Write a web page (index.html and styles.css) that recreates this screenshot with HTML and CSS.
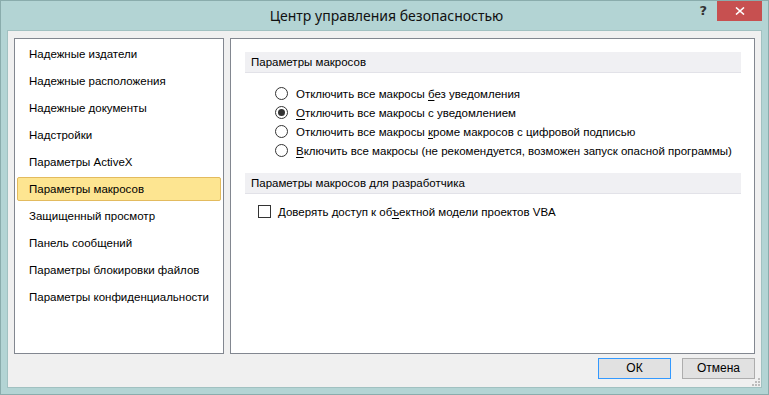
FILE: index.html
```html
<!DOCTYPE html>
<html lang="ru">
<head>
<meta charset="utf-8">
<title>Центр управления безопасностью</title>
<link rel="stylesheet" href="styles.css">
</head>
<body>
<div class="window">
  <div class="titlebar">
    <div class="tb-spacer"></div>
    <div class="title">Центр управления безопасностью</div>
    <div class="tb-controls">
      <span class="help">?</span>
      <span class="close"><svg width="10" height="8" viewBox="0 0 10 8"><path d="M1 0.5 L9 7.5 M9 0.5 L1 7.5" stroke="#fff" stroke-width="1.6"/></svg></span>
    </div>
  </div>
  <div class="client">
    <div class="panels">
      <ul class="nav">
        <li class="nav-item">Надежные издатели</li>
        <li class="nav-item">Надежные расположения</li>
        <li class="nav-item">Надежные документы</li>
        <li class="nav-item">Надстройки</li>
        <li class="nav-item">Параметры ActiveX</li>
        <li class="nav-item selected">Параметры макросов</li>
        <li class="nav-item">Защищенный просмотр</li>
        <li class="nav-item">Панель сообщений</li>
        <li class="nav-item">Параметры блокировки файлов</li>
        <li class="nav-item">Параметры конфиденциальности</li>
      </ul>
      <div class="content">
        <div class="section-head">Параметры макросов</div>
        <div class="options">
          <label class="opt"><span class="radio"></span><span>Отключить все макросы <u>б</u>ез уведомления</span></label>
          <label class="opt"><span class="radio checked"></span><span><u>О</u>тключить все макросы с уведомлением</span></label>
          <label class="opt"><span class="radio"></span><span>Отключить все макросы <u>к</u>роме макросов с цифровой подписью</span></label>
          <label class="opt"><span class="radio"></span><span><u>В</u>ключить все макросы (не рекомендуется, возможен запуск опасной программы)</span></label>
        </div>
        <div class="section-head second">Параметры макросов для разработчика</div>
        <label class="check-row"><span class="checkbox"></span><span>Доверять доступ к об<u>ъ</u>ектной модели проектов VBA</span></label>
      </div>
    </div>
    <div class="buttons">
      <button class="btn default">ОК</button>
      <button class="btn">Отмена</button>
    </div>
    <svg class="grip" width="9" height="9" viewBox="0 0 9 9">
      <rect x="7" y="1" width="2" height="2" fill="#bcbcbc"/>
      <rect x="4" y="4" width="2" height="2" fill="#bcbcbc"/>
      <rect x="7" y="4" width="2" height="2" fill="#bcbcbc"/>
      <rect x="1" y="7" width="2" height="2" fill="#bcbcbc"/>
      <rect x="4" y="7" width="2" height="2" fill="#bcbcbc"/>
      <rect x="7" y="7" width="2" height="2" fill="#bcbcbc"/>
    </svg>
  </div>
</div>
</body>
</html>
```

FILE: styles.css
```css
* { box-sizing: border-box; }
html, body { margin: 0; padding: 0; }
body {
  width: 769px;
  height: 395px;
  overflow: hidden;
  font-family: "Liberation Sans", Arial, sans-serif;
  font-size: 11.5px;
  color: #000;
}
.window {
  width: 769px;
  height: 395px;
  border: 1px solid #8aacac;
  background: #b3d4d4;
  display: flex;
  flex-direction: column;
  padding: 0 6px 6px 6px;
}
.titlebar {
  height: 29px;
  display: grid;
  grid-template-columns: 1fr auto 1fr;
  align-items: start;
  margin: 0 -6px 0 0;
}
.title {
  font-family: "Noto Sans", "Open Sans", sans-serif;
  font-size: 14px;
  line-height: 30px;
  color: #111;
  padding-right: 2px;
}
.tb-controls {
  display: flex;
  justify-content: flex-end;
  align-items: flex-start;
  padding-right: 6px;
}
.help {
  font-weight: bold;
  font-size: 13px;
  line-height: 20px;
  color: #333;
  margin-right: 10px;
  font-family: "DejaVu Sans", sans-serif;
}
.close {
  width: 45px;
  height: 20px;
  background: #c75050;
  display: flex;
  align-items: center;
  justify-content: center;
}
.client {
  flex: 1;
  position: relative;
  border: 1px solid #a1c1c1;
  background: #f0f0f0;
  padding: 7px 6px 0 6px;
  display: flex;
  flex-direction: column;
}
.panels {
  display: flex;
  gap: 6px;
  height: 316px;
}
.nav {
  list-style: none;
  margin: 0;
  width: 210px;
  flex: none;
  border: 1px solid #828790;
  background: #fff;
  padding: 3px 2px 0 2px;
  display: flex;
  flex-direction: column;
  gap: 3px;
}
.nav-item {
  height: 24px;
  line-height: 22px;
  padding-left: 11px;
  border: 1px solid transparent;
  border-radius: 2px;
  white-space: nowrap;
}
.nav-item.selected {
  background: #fde591;
  border-color: #e3bb5e;
}
.content {
  flex: 1;
  min-width: 0;
  overflow: hidden;
  border: 1px solid #828790;
  background: #fff;
  padding: 13px 13px 0 14px;
}
.section-head {
  height: 21px;
  line-height: 20px;
  background: #f0f0f3;
  border-bottom: 1px solid #e2e2e8;
  padding-left: 6px;
}
.section-head.second {
  margin-top: 13px;
}
.options {
  padding: 11px 0 0 30px;
  display: flex;
  flex-direction: column;
}
.opt {
  height: 19px;
  display: flex;
  align-items: center;
  gap: 8px;
  white-space: nowrap;
}
.radio {
  width: 13px;
  height: 13px;
  border: 1px solid #333;
  border-radius: 50%;
  background: #fff;
  display: flex;
  align-items: center;
  justify-content: center;
  flex: none;
}
.radio.checked::after {
  content: "";
  width: 7px;
  height: 7px;
  border-radius: 50%;
  background: #333;
}
.check-row {
  display: flex;
  align-items: center;
  gap: 7px;
  height: 19px;
  margin-top: 8px;
  padding-left: 13px;
}
.checkbox {
  width: 13px;
  height: 13px;
  border: 1px solid #333;
  background: #fff;
  flex: none;
}
u { text-decoration-thickness: 1px; text-underline-offset: 2px; }
.buttons {
  display: flex;
  justify-content: flex-end;
  gap: 11px;
  margin-top: 4px;
  padding-right: 0;
}
.btn {
  width: 73px;
  height: 21px;
  font-family: inherit;
  font-size: 12px;
  background: #e1e1e1;
  border: 1px solid #adadad;
  color: #000;
  padding: 0;
  line-height: 19px;
}
.btn.default {
  border-color: #3399ff;
}
.grip {
  position: absolute;
  right: 1px;
  bottom: 1px;
}
```
